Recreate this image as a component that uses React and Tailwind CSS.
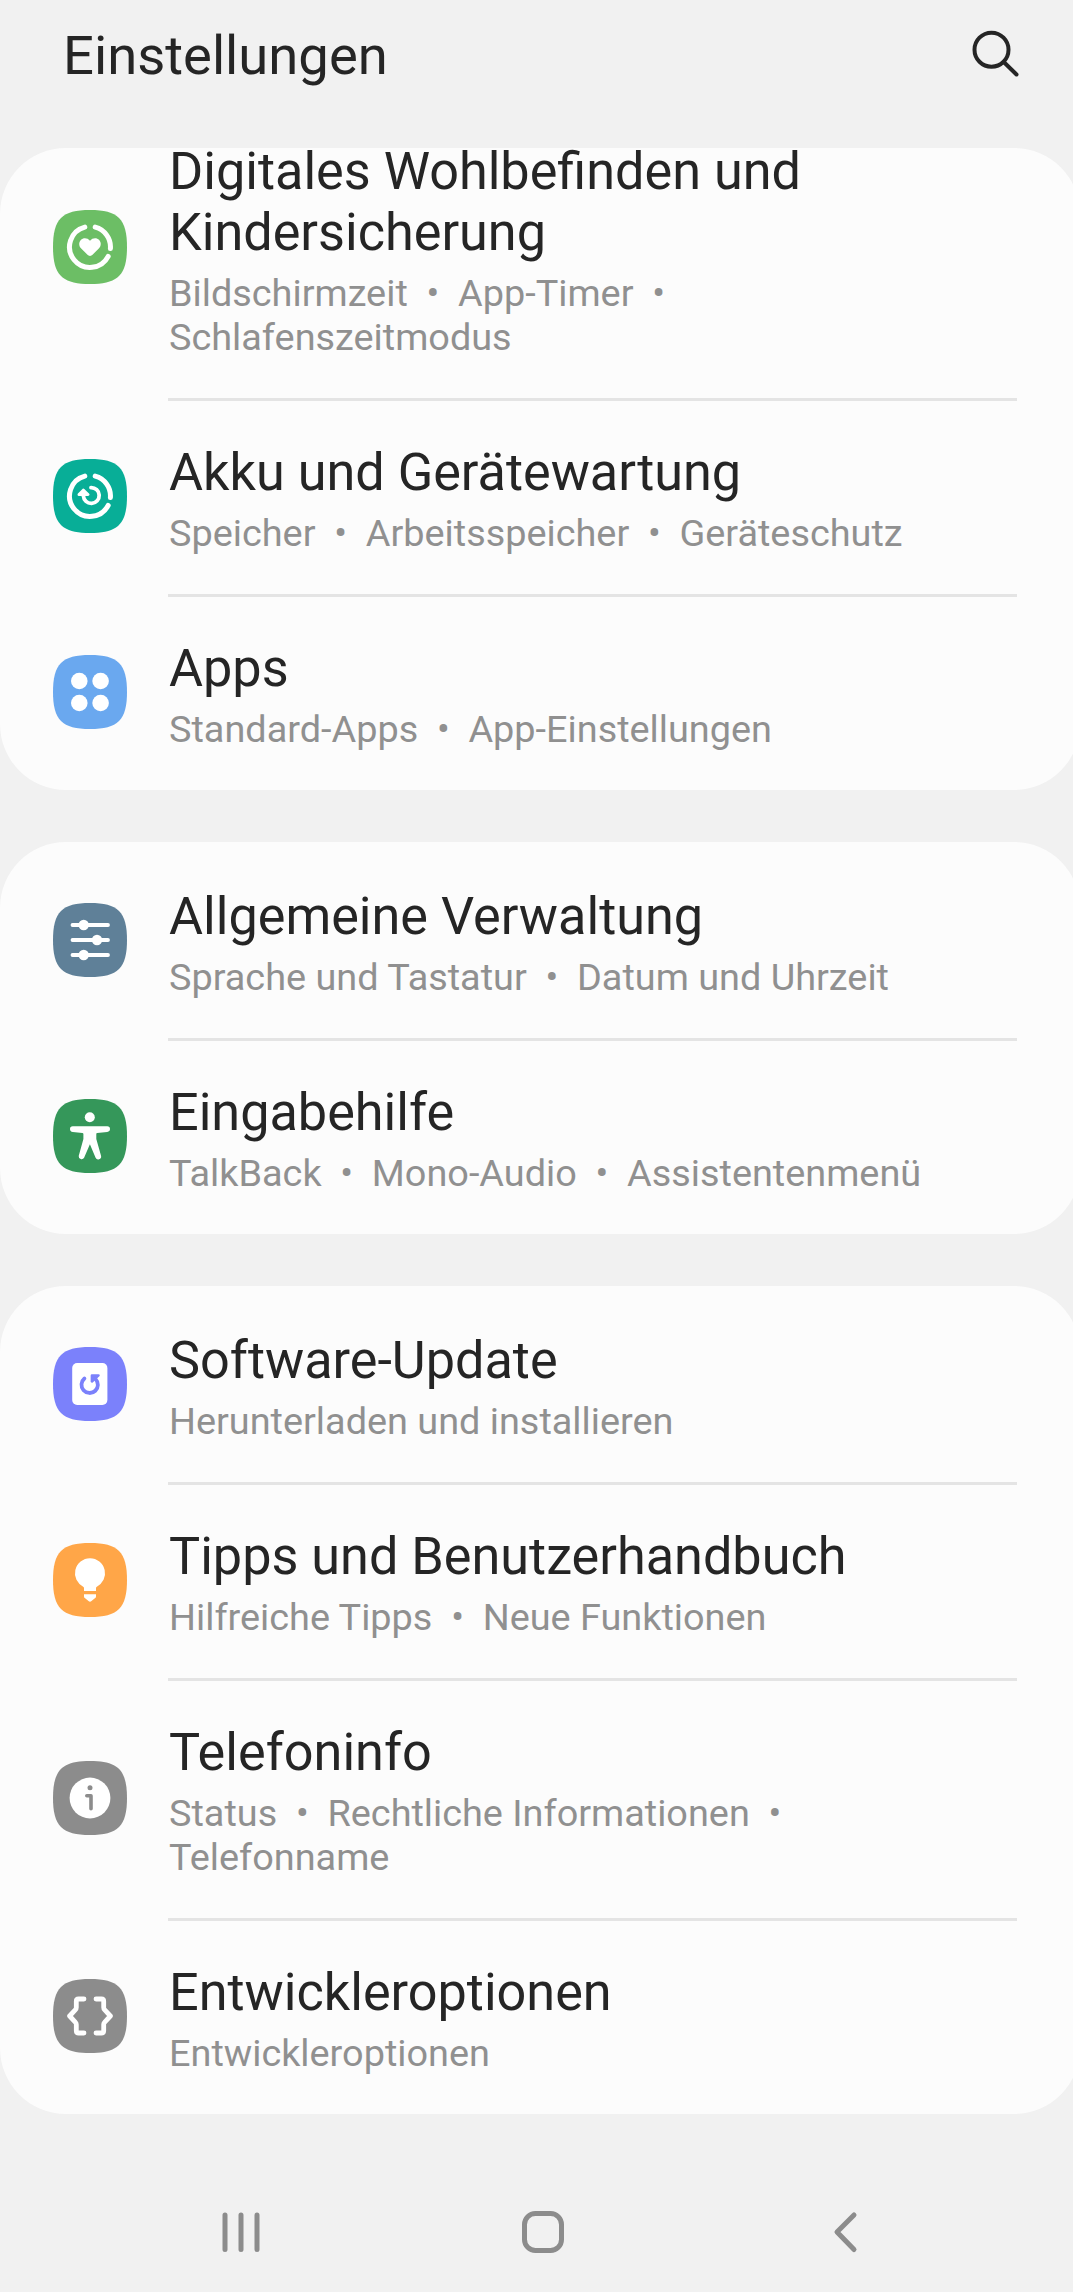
import React from "react";

const RING = "M42.2 17.1A20.5 20.5 0 0 1 57.4 38.6M55.2 46.4A20.5 20.5 0 1 1 31.8 17.1";

function AppIcon({ color, children }) {
  return (
    <svg viewBox="0 0 74 74" className="w-[74px] h-[74px] shrink-0" fill="none" strokeLinecap="round" strokeLinejoin="round">
      <path d="M37 0C65 0 74 9 74 37S65 74 37 74 0 65 0 37 9 0 37 0Z" fill={color} />
      {children}
    </svg>
  );
}

const icons = {
  wellbeing: (
    <AppIcon color="#6cbe65">
      <path d={RING} stroke="#fff" strokeWidth="5" />
      <path d="M37 46c-1 0-1.700-.5-2.500-1.200L28.200 38.600c-2.600-2.600-2.500-6.300-.4-8.500 2.400-2.500 6.600-2.400 9.200.7 2.600-3.100 6.800-3.200 9.200-.7 2.100 2.200 2.200 5.900-.4 8.500L39.500 44.800C38.700 45.500 38 46 37 46Z" fill="#fff" />
    </AppIcon>
  ),
  battery: (
    <AppIcon color="#08ae97">
      <path d={RING} stroke="#fff" strokeWidth="5" />
      <path d="M38 28.600A7.900 7.900 0 1 1 30.400 37" stroke="#fff" strokeWidth="3.800" />
      <path d="M26 35.500 30.300 31.200 35 35.500Z" fill="#fff" stroke="#fff" strokeWidth="3" />
    </AppIcon>
  ),
  apps: (
    <AppIcon color="#6aa8ef">
      <g fill="#fff">
        <circle cx="26.300" cy="26" r="8.300" />
        <circle cx="47.600" cy="26" r="8.300" />
        <circle cx="26.300" cy="48" r="8.300" />
        <circle cx="47.600" cy="48" r="8.300" />
      </g>
    </AppIcon>
  ),
  general: (
    <AppIcon color="#5f8098">
      <path d="M19.500 22H55M19.500 37H55M19.500 52H55" stroke="#fff" strokeWidth="3.800" />
      <g fill="#fff">
        <circle cx="30.700" cy="22" r="5.200" />
        <circle cx="44" cy="37" r="5.200" />
        <circle cx="30.700" cy="52" r="5.200" />
      </g>
    </AppIcon>
  ),
  accessibility: (
    <AppIcon color="#35975a">
      <circle cx="36.800" cy="18.300" r="5" fill="#fff" />
      <path d="M19.800 27.300H54.200a2.800 2.800 0 0 1 0 5.600L44.200 34q-1 .1-.9 1.200V40L48.100 57a2.900 2.900 0 0 1-5.500 1.700L36.900 45.200 31.100 58.700A2.900 2.900 0 0 1 25.700 57L30.400 40V35.200q0-1.100-1-1.200L19.800 32.900a2.800 2.800 0 0 1 0-5.600Z" fill="#fff" />
    </AppIcon>
  ),
  update: (
    <AppIcon color="#7b81fb">
      <rect x="19.200" y="16" width="35.200" height="42" rx="5" fill="#fff" />
      <path d="M31.400 31.500A8.200 8.200 0 1 0 42.500 32" stroke="#7b81fb" strokeWidth="3.800" />
      <path d="M38.900 28.400H45.500L38.900 34.500Z" fill="#7b81fb" stroke="#7b81fb" strokeWidth="2.500" />
    </AppIcon>
  ),
  tips: (
    <AppIcon color="#ffa648">
      <path d="M37 15.200A15.100 15.100 0 0 1 43.500 43.900Q43 44.200 43 45V48H31V45Q31 44.200 30.500 43.900A15.100 15.100 0 0 1 37 15.200Z" fill="#fff" />
      <path d="M31 51.200H43V53.500Q43 54.500 42.200 55L38.500 58Q37 59.300 35.500 58L31.800 55Q31 54.500 31 53.500Z" fill="#fff" />
    </AppIcon>
  ),
  about: (
    <AppIcon color="#8c8c8c">
      <circle cx="37" cy="37" r="20.400" fill="#fff" />
      <circle cx="37" cy="26.700" r="2.500" fill="#8c8c8c" />
      <path d="M33.800 34.800H38V47.700" stroke="#8c8c8c" strokeWidth="3.600" />
    </AppIcon>
  ),
  developer: (
    <AppIcon color="#8c8c8c">
      <path
        d="M31 20H25.500Q23.300 20 23.300 22.200V28.500Q23.300 29.800 22.500 30.600L16.600 37 22.500 43.400Q23.300 44.200 23.300 45.500V51.800Q23.300 54 25.500 54H31M43 20H48.500Q50.700 20 50.700 22.200V28.500Q50.700 29.800 51.500 30.600L57.400 37 51.500 43.400Q50.700 44.200 50.700 45.500V51.800Q50.700 54 48.500 54H43"
        stroke="#fff"
        strokeWidth="4.800"
      />
    </AppIcon>
  ),
};

const groups = [
  [
    { icon: "wellbeing", title: ["Digitales Wohlbefinden und", "Kindersicherung"], sub: ["Bildschirmzeit  •  App-Timer  •", "Schlafenszeitmodus"] },
    { icon: "battery", title: ["Akku und Gerätewartung"], sub: ["Speicher  •  Arbeitsspeicher  •  Geräteschutz"] },
    { icon: "apps", title: ["Apps"], sub: ["Standard-Apps  •  App-Einstellungen"] },
  ],
  [
    { icon: "general", title: ["Allgemeine Verwaltung"], sub: ["Sprache und Tastatur  •  Datum und Uhrzeit"] },
    { icon: "accessibility", title: ["Eingabehilfe"], sub: ["TalkBack  •  Mono-Audio  •  Assistentenmenü"] },
  ],
  [
    { icon: "update", title: ["Software-Update"], sub: ["Herunterladen und installieren"] },
    { icon: "tips", title: ["Tipps und Benutzerhandbuch"], sub: ["Hilfreiche Tipps  •  Neue Funktionen"] },
    { icon: "about", title: ["Telefoninfo"], sub: ["Status  •  Rechtliche Informationen  •", "Telefonname"] },
    { icon: "developer", title: ["Entwickleroptionen"], sub: ["Entwickleroptionen"] },
  ],
];

function SettingsRow({ item, divider }) {
  return (
    <div className="flex items-center pl-[53px]">
      <div className={item.title.length > 1 ? "mb-px" : ""}>{icons[item.icon]}</div>
      <div className={`ml-[41px] w-[849px] pl-px pb-[39px] whitespace-pre ${divider ? "border-t-[3px] border-[#e4e4e4] pt-[41px]" : "pt-[44px]"}`}>
        <h2 className="text-[52.200px] leading-[61px] text-[#252525]">
          {item.title.map((line) => (
            <span key={line} className="block">{line}</span>
          ))}
        </h2>
        <p className="mt-2 text-[37.850px] leading-[44px] text-[#909090]">
          {item.sub.map((line) => (
            <span key={line} className="block">{line}</span>
          ))}
        </p>
      </div>
    </div>
  );
}

export default function App() {
  return (
    <div className="w-[1073px] h-[2292px] overflow-hidden flex flex-col bg-[#f1f1f1] font-['Roboto',sans-serif]">
      <header className="h-[148px] shrink-0 flex items-start justify-between pl-[63px] pr-[52px]">
        <h1 className="mt-[23px] text-[54.400px] leading-[66px] text-[#252525]">Einstellungen</h1>
        <svg viewBox="0 0 50 50" className="mt-[29px] w-[50px] h-[50px]" fill="none" stroke="#252525" strokeWidth="4" strokeLinecap="round">
          <circle cx="20.500" cy="20.700" r="17" />
          <path d="M33 33.200 45.500 45.500" />
        </svg>
      </header>

      {/* Cards run slightly past the right edge of the screen */}
      <main className="w-[1080px] flex flex-col gap-[52px]">
        {groups.map((group, idx) => (
          <section key={idx} className="flex flex-col rounded-[66px] bg-[#fcfcfc]">
            <div className={idx === 0 ? "-mt-[51px]" : ""}>
              {group.map((item, i) => (
                <SettingsRow key={item.icon} item={item} divider={i > 0} />
              ))}
            </div>
          </section>
        ))}
      </main>

      <nav className="mt-[96px] h-[44px] flex items-center pl-[219px]">
        <svg viewBox="0 0 44 44" className="w-[44px] h-[44px]" fill="none" stroke="#8c8c8c" strokeWidth="5" strokeLinecap="round">
          <path d="M6 5V39.500M22 5V39.500M38 5V39.500" />
        </svg>
        <svg viewBox="0 0 44 44" className="ml-[258px] w-[44px] h-[44px]" fill="none" stroke="#8c8c8c" strokeWidth="5">
          <rect x="3.500" y="3.500" width="37" height="37" rx="11" />
        </svg>
        <svg viewBox="0 0 44 44" className="ml-[252px] w-[44px] h-[44px]" fill="none" stroke="#8c8c8c" strokeWidth="5" strokeLinecap="round" strokeLinejoin="round">
          <path d="M37 5 20 22 37 39.500" />
        </svg>
      </nav>
    </div>
  );
}
